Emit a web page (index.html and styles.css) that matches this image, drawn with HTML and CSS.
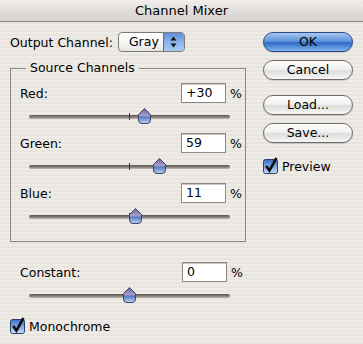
FILE: index.html
```html
<!DOCTYPE html>
<html lang="en">
<head>
    <meta charset="UTF-8">
    <title>Channel Mixer</title>
    <link rel="stylesheet" href="styles.css">
</head>
<body>
    <svg class="defs" width="0" height="0">
        <defs>
            <linearGradient id="thumbFill" x1="0" y1="0" x2="0" y2="1">
                <stop offset="0" stop-color="#6e62a0"/>
                <stop offset="0.5" stop-color="#a79fcb"/>
                <stop offset="0.56" stop-color="#4f78bf"/>
                <stop offset="1" stop-color="#c0d8f4"/>
            </linearGradient>
            <linearGradient id="boxFill" x1="0" y1="0" x2="0" y2="1">
                <stop offset="0" stop-color="#3b6fc4"/>
                <stop offset="0.5" stop-color="#7ea7e2"/>
                <stop offset="1" stop-color="#c9def7"/>
            </linearGradient>
        </defs>
    </svg>

    <div class="titlebar">Channel Mixer</div>

    <div class="dialog">
        <div class="main">
            <div class="output-row">
                <span class="output-label">Output Channel:</span>
                <div class="popup">
                    <span class="popup-value">Gray</span>
                    <span class="popup-arrows">
                        <svg width="7" height="12" viewBox="0 0 7 12"><path d="M3.5 0.5 L6.5 4.5 H0.5 Z M0.5 7.5 H6.5 L3.5 11.5 Z" fill="#111"/></svg>
                    </span>
                </div>
            </div>

            <fieldset class="group">
                <legend>Source Channels</legend>

                <div class="channel">
                    <div class="channel-row">
                        <span class="channel-label">Red:</span>
                        <span class="field">+30</span>
                        <span class="pct">%</span>
                    </div>
                    <div class="slider">
                        <div class="track"></div>
                        <div class="tick"></div>
                        <svg class="thumb" style="left: 57.5%" width="13" height="16" viewBox="0 0 13 16"><path d="M6.5 0.5 L12.5 6.5 V12 Q12.5 15.5 9 15.5 H4 Q0.5 15.5 0.5 12 V6.5 Z" fill="url(#thumbFill)" stroke="#43406e"/></svg>
                    </div>
                </div>

                <div class="channel">
                    <div class="channel-row">
                        <span class="channel-label">Green:</span>
                        <span class="field">59</span>
                        <span class="pct">%</span>
                    </div>
                    <div class="slider">
                        <div class="track"></div>
                        <div class="tick"></div>
                        <svg class="thumb" style="left: 64.75%" width="13" height="16" viewBox="0 0 13 16"><path d="M6.5 0.5 L12.5 6.5 V12 Q12.5 15.5 9 15.5 H4 Q0.5 15.5 0.5 12 V6.5 Z" fill="url(#thumbFill)" stroke="#43406e"/></svg>
                    </div>
                </div>

                <div class="channel">
                    <div class="channel-row">
                        <span class="channel-label">Blue:</span>
                        <span class="field">11</span>
                        <span class="pct">%</span>
                    </div>
                    <div class="slider">
                        <div class="track"></div>
                        <div class="tick"></div>
                        <svg class="thumb" style="left: 52.75%" width="13" height="16" viewBox="0 0 13 16"><path d="M6.5 0.5 L12.5 6.5 V12 Q12.5 15.5 9 15.5 H4 Q0.5 15.5 0.5 12 V6.5 Z" fill="url(#thumbFill)" stroke="#43406e"/></svg>
                    </div>
                </div>
            </fieldset>

            <div class="channel constant">
                <div class="channel-row">
                    <span class="channel-label">Constant:</span>
                    <span class="field">0</span>
                    <span class="pct">%</span>
                </div>
                <div class="slider">
                    <div class="track"></div>
                    <div class="tick"></div>
                    <svg class="thumb" style="left: 50%" width="13" height="16" viewBox="0 0 13 16"><path d="M6.5 0.5 L12.5 6.5 V12 Q12.5 15.5 9 15.5 H4 Q0.5 15.5 0.5 12 V6.5 Z" fill="url(#thumbFill)" stroke="#43406e"/></svg>
                </div>
            </div>

            <div class="check mono">
                <svg width="16" height="17" viewBox="0 0 16 17"><rect x="0.5" y="2.5" width="14" height="14" rx="2" fill="url(#boxFill)" stroke="#27416f"/><path d="M3.2 9 L6.4 13.6 L13.5 1" fill="none" stroke="#0d0d0d" stroke-width="2.6"/></svg>
                <span>Monochrome</span>
            </div>
        </div>

        <div class="side">
            <div class="button default">OK</div>
            <div class="button">Cancel</div>
            <div class="button spaced">Load...</div>
            <div class="button">Save...</div>
            <div class="check preview">
                <svg width="16" height="17" viewBox="0 0 16 17"><rect x="0.5" y="2.5" width="14" height="14" rx="2" fill="url(#boxFill)" stroke="#27416f"/><path d="M3.2 9 L6.4 13.6 L13.5 1" fill="none" stroke="#0d0d0d" stroke-width="2.6"/></svg>
                <span>Preview</span>
            </div>
        </div>
    </div>
</body>
</html>
```

FILE: styles.css
```css
body {
    margin: 0;
    width: 363px;
    height: 344px;
    overflow: hidden;
    font-family: "DejaVu Sans", sans-serif;
    font-size: 12.5px;
    color: #000;
    background: repeating-linear-gradient(to bottom, #efebe7 0, #efebe7 2px, #e8e4e0 2px, #e8e4e0 4px);
}

.defs {
    position: absolute;
}

.titlebar {
    height: 21px;
    line-height: 21px;
    text-align: center;
    font-size: 13px;
    border-bottom: 1px solid #8c8783;
    border-radius: 6px 6px 0 0;
    background: linear-gradient(#f1eeeb, #e2dedb 50%, #d6d2ce);
}

.dialog {
    display: flex;
}

.main {
    width: 236px;
    padding-left: 10px;
}

/* Output channel popup */
.output-row {
    display: flex;
    align-items: center;
    height: 20px;
    margin-top: 10px;
}

.output-label {
    margin-right: 5px;
}

.popup {
    display: flex;
    width: 65px;
    height: 18px;
    border: 1px solid #7e7a76;
    border-radius: 4px;
    background: linear-gradient(#ffffff, #f4f4f4 60%, #e6e6e6);
    overflow: hidden;
}

.popup-value {
    flex: 1;
    padding-left: 10px;
    line-height: 18px;
}

.popup-arrows {
    width: 20px;
    display: flex;
    align-items: center;
    justify-content: center;
    border-left: 1px solid #4f6ea6;
    background: linear-gradient(#5f8fd8, #8ab3ea 50%, #a9cbf4);
}

/* Group box */
.group {
    margin: 9px 0 0 0;
    padding: 8px 6px 8px 9px;
    border: 1px solid #8d8580;
    min-width: 0;
}

.group legend {
    margin-left: 6px;
    padding: 0 4px;
    line-height: 14px;
}

.channel {
    margin-bottom: 2px;
}

.channel-row {
    display: flex;
    align-items: center;
    height: 20px;
}

.channel-label {
    flex: 1;
}

.field {
    width: 39px;
    height: 18px;
    line-height: 18px;
    padding-left: 4px;
    background: #fff;
    border: 1px solid #8f8883;
    box-shadow: inset 0 1px 0 #c9c5c2;
}

.pct {
    width: 9px;
    margin-left: 4px;
}

.slider {
    position: relative;
    margin-left: 9px;
    width: 201px;
    height: 28px;
}

.track {
    position: absolute;
    left: 0;
    right: 0;
    top: 12px;
    height: 4px;
    border-radius: 2px;
    background: linear-gradient(#5d5550, #857c77 50%, #c2bab5);
}

.tick {
    position: absolute;
    left: 100px;
    top: 10px;
    width: 1px;
    height: 7px;
    background: #3a3330;
}

.thumb {
    position: absolute;
    top: 5px;
    margin-left: -6.5px;
}

.constant {
    margin-top: 20px;
    padding-left: 10px;
    width: 220px;
}

/* Checkboxes */
.check {
    display: flex;
    align-items: flex-end;
    gap: 3px;
}

.check svg {
    display: block;
}

.mono {
    margin-top: 7px;
}

/* Buttons */
.side {
    margin-left: 17px;
    width: 90px;
    padding-top: 10px;
}

.button {
    height: 18px;
    line-height: 18px;
    text-align: center;
    border: 1px solid #6f6a66;
    border-radius: 10px;
    margin-bottom: 8px;
    background: linear-gradient(#fdfdfd, #f1f1f1 45%, #dedede 55%, #f6f6f6);
    box-shadow: 0 1px 1px rgba(0, 0, 0, 0.15);
}

.button.default {
    border-color: #2b4a85;
    background: linear-gradient(#a9c8f0, #5d93dc 45%, #2f6cc6 55%, #7fb4ee);
}

.button.spaced {
    margin-top: 15px;
}

.preview {
    margin-top: 14px;
}
```
